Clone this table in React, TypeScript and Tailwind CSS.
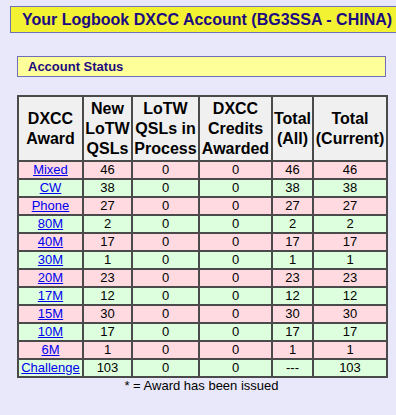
import React from "react";

type Row = { name: string; n: string; p: string; c: string; a: string; t: string };

const rows: Row[] = [
  { name: "Mixed", n: "46", p: "0", c: "0", a: "46", t: "46" },
  { name: "CW", n: "38", p: "0", c: "0", a: "38", t: "38" },
  { name: "Phone", n: "27", p: "0", c: "0", a: "27", t: "27" },
  { name: "80M", n: "2", p: "0", c: "0", a: "2", t: "2" },
  { name: "40M", n: "17", p: "0", c: "0", a: "17", t: "17" },
  { name: "30M", n: "1", p: "0", c: "0", a: "1", t: "1" },
  { name: "20M", n: "23", p: "0", c: "0", a: "23", t: "23" },
  { name: "17M", n: "12", p: "0", c: "0", a: "12", t: "12" },
  { name: "15M", n: "30", p: "0", c: "0", a: "30", t: "30" },
  { name: "10M", n: "17", p: "0", c: "0", a: "17", t: "17" },
  { name: "6M", n: "1", p: "0", c: "0", a: "1", t: "1" },
  { name: "Challenge", n: "103", p: "0", c: "0", a: "---", t: "103" },
];

export default function App() {
  const th = "border-2 border-[#4a4a4a] bg-[#f0f0f0] font-bold text-[16px] leading-[20px] text-center align-middle p-0";
  const td = "border-2 border-[#4a4a4a] text-[13px] leading-[14px] text-center align-middle p-0 text-black";
  return (
    <div
      className="w-[396px] h-[415px] overflow-hidden bg-[#e8e8fa]"
      style={{ fontFamily: '"Liberation Sans", Arial, sans-serif' }}
    >
      <div className="pt-[6px] pl-[10px]">
        <div className="w-[400px] h-[27px] border border-[#7070b8] bg-[#f2f232] pl-[11px] flex items-center">
          <span className="text-[16px] font-bold text-[#1c0a80] whitespace-nowrap leading-none">
            Your Logbook DXCC Account (BG3SSA - CHINA)
          </span>
        </div>
      </div>
      <div className="pl-[17px] mt-[23px]">
        <div className="w-[369px] h-[21px] border border-[#7070b8] bg-[#ffff99] pl-[10px] flex items-center">
          <span className="text-[13px] font-bold text-[#1c0a80] leading-none">Account Status</span>
        </div>
      </div>
      <div className="pl-[17px] mt-[18px]">
        <table className="border-collapse table-fixed w-[369px] border-2 border-[#4a4a4a]">
          <colgroup>
            <col className="w-[65px]" />
            <col className="w-[49px]" />
            <col className="w-[67px]" />
            <col className="w-[73px]" />
            <col className="w-[41px]" />
            <col className="w-[74px]" />
          </colgroup>
          <thead>
            <tr className="h-[65px]">
              <th className={th}>DXCC<br />Award</th>
              <th className={th}>New<br />LoTW<br />QSLs</th>
              <th className={th}>LoTW<br />QSLs in<br />Process</th>
              <th className={th}>DXCC<br />Credits<br />Awarded</th>
              <th className={th}>Total<br />(All)</th>
              <th className={th}>Total<br />(Current)</th>
            </tr>
          </thead>
          <tbody>
            {rows.map((r, i) => (
              <tr key={r.name} className={`h-[18px] ${i % 2 === 0 ? "bg-[#ffdbe1]" : "bg-[#ddffdd]"}`}>
                <td className={td}>
                  <a href="#" className="text-[#0000ee] underline">{r.name}</a>
                </td>
                <td className={td}>{r.n}</td>
                <td className={td}>{r.p}</td>
                <td className={td}>{r.c}</td>
                <td className={td}>{r.a}</td>
                <td className={td}>{r.t}</td>
              </tr>
            ))}
          </tbody>
        </table>
        <div className="w-[369px] text-center text-[13px] leading-[16px] text-black">
          * = Award has been issued
        </div>
      </div>
    </div>
  );
}
